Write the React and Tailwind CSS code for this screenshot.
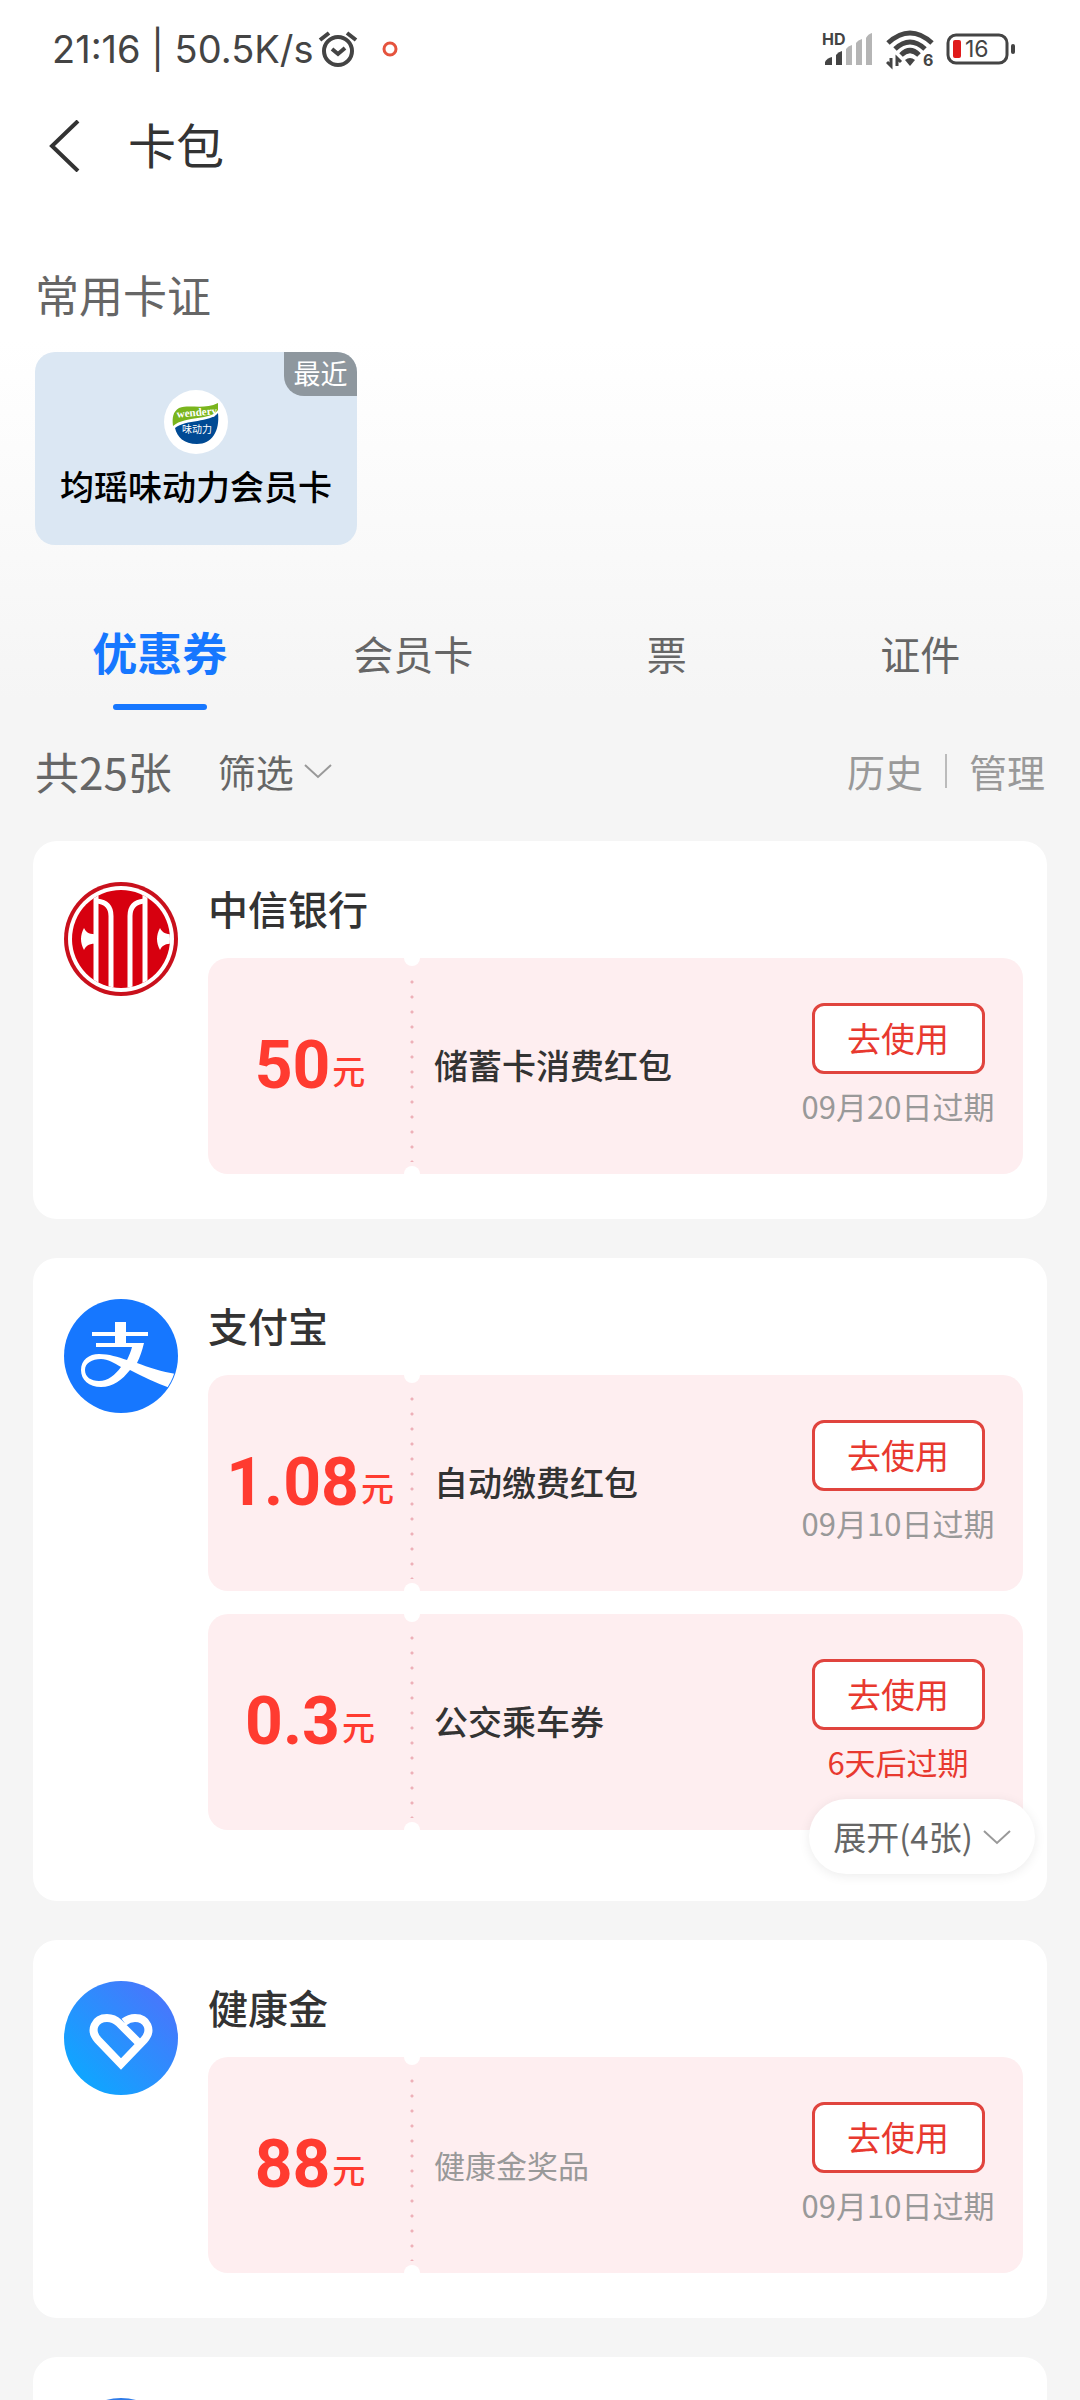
import React, { useState } from "react";

const tabs = ["优惠券", "会员卡", "票", "证件"];

const shops = [
    {
        name: "中信银行",
        logo: CiticLogo,
        coupons: [{ amount: "50", title: "储蓄卡消费红包", expire: "09月20日过期" }],
    },
    {
        name: "支付宝",
        logo: AlipayLogo,
        more: 4,
        coupons: [
            { amount: "1.08", title: "自动缴费红包", expire: "09月10日过期" },
            { amount: "0.3", title: "公交乘车券", expire: "6天后过期", urgent: true },
        ],
    },
    {
        name: "健康金",
        logo: HealthLogo,
        coupons: [{ amount: "88", title: "健康金奖品", expire: "09月10日过期", light: true }],
    },
    { name: "", logo: BlueLogo, coupons: [] },
];

function CiticLogo() {
    return (
        <svg viewBox="0 0 114 114" className="size-[114px] shrink-0" aria-hidden="true">
            <defs>
                <clipPath id="citicInner">
                    <circle cx="57" cy="57" r="49" />
                </clipPath>
            </defs>
            <circle cx="57" cy="57" r="57" fill="#c9101c" />
            <circle cx="57" cy="57" r="53" fill="#fff" />
            <g clipPath="url(#citicInner)">
                <rect width="114" height="114" fill="#d7000f" />
                <path d="M32 0V114M81 0V114" stroke="#fff" strokeWidth="5" fill="none" />
                <path d="M33 19C42 20 47 25 47 34V114M80 19C71 20 66 25 66 34V114" stroke="#fff" strokeWidth="5" fill="none" />
                <path d="M34 52C25 53 22 50 20 46C16 53 16 61 20 68C22 64 25 61 34 62Z" fill="#fff" />
                <path d="M110 52C101 53 98 50 96 46C92 53 92 61 96 68C98 64 101 61 110 62Z" fill="#fff" />
            </g>
        </svg>
    );
}

function AlipayLogo() {
    return (
        <svg viewBox="0 0 114 114" className="size-[114px] shrink-0" aria-hidden="true">
            <defs>
                <clipPath id="alipayRound">
                    <circle cx="57" cy="57" r="56" />
                </clipPath>
            </defs>
            <circle cx="57" cy="57" r="57" fill="#1677ff" />
            <g clipPath="url(#alipayRound)" fill="#fff">
                <path d="M51 23H62V33H84V37H62V44H80C78 52 76 58 73 64C84 68 98 73 112 75L106 89C92 84 78 77 66 71C58 81 49 88 37 88C25 88 17 81 17 71C17 61 25 55 35 55C45 55 54 58 63 61C65 57 67 52 68 48H32V44H51V37H28V33H51ZM37 60C28 60 21 64 21 71C21 78 27 82 35 82C44 82 51 76 57 68C50 64 44 60 37 60Z" fillRule="evenodd" />
            </g>
        </svg>
    );
}

function HealthLogo() {
    return (
        <svg viewBox="0 0 114 114" className="size-[114px] shrink-0" aria-hidden="true">
            <defs>
                <linearGradient id="healthBg" x1="0.15" y1="0.85" x2="0.85" y2="0.15">
                    <stop offset="0" stopColor="#10a5ff" />
                    <stop offset="1" stopColor="#4678fc" />
                </linearGradient>
            </defs>
            <circle cx="57" cy="57" r="57" fill="url(#healthBg)" />
            <path d="M76 63L55 42C51 38 48 37 43 37C31 37 25 49 34 59L57 83L80 59C89 49 83 37 71 37C67 37 64 38 60 41" stroke="#fff" strokeWidth="8" fill="none" />
        </svg>
    );
}

function BlueLogo() {
    return <div className="size-[114px] shrink-0 rounded-full bg-[#2f7be8]" />;
}

function WenderyLogo() {
    return (
        <svg viewBox="0 0 64 64" className="size-16" aria-hidden="true">
            <circle cx="32" cy="32" r="32" fill="#fff" />
            <path d="M9 36C8 27 9 22 15 18C25 14 40 20 54 13V20C47 31 22 25 9 36Z" fill="#7ab51d" />
            <path d="M11 38C22 29 46 33 54 23C56 41 48 54 33 54C20 54 13 47 11 38Z" fill="#004a94" />
            <text x="33" y="26" fontSize="11" fontWeight="700" textAnchor="middle" fill="#fff" fontFamily="Liberation Serif, serif" transform="rotate(-5 32 24)">wendery</text>
            <text x="33" y="43" fontSize="10" textAnchor="middle" fill="#fff">味动力</text>
        </svg>
    );
}

function Chevron() {
    return (
        <svg viewBox="0 0 28 16" className="h-4 w-7" fill="none" stroke="#999" strokeWidth="2" aria-hidden="true">
            <path d="M1 2L14 14L27 2" />
        </svg>
    );
}

function StatusBar() {
    return (
        <div className="flex h-[98px] items-center justify-between pl-[52px] pr-[64px] text-[#444]">
            <div className="flex items-center">
                <span className="font-['Inter',sans-serif] text-[38px]">21:16 | 50.5K/s</span>
                <svg viewBox="0 0 40 38" className="ml-1 h-[38px] w-10" fill="none" stroke="#444" strokeWidth="4" aria-hidden="true">
                    <circle cx="20" cy="21" r="14" />
                    <path d="M14 19L20 24L27 18M2 10L11 3M38 10L29 3" />
                </svg>
                <svg viewBox="0 0 16 16" className="ml-6 size-4" aria-hidden="true">
                    <circle cx="8" cy="8" r="6" fill="none" stroke="#e5533d" strokeWidth="3" />
                </svg>
            </div>
            <div className="flex items-center gap-3">
                <svg viewBox="0 0 52 42" className="h-[42px] w-[52px]" aria-hidden="true">
                    <text x="0" y="17" fontSize="16" fontWeight="700" fill="#444" fontFamily="Inter, sans-serif">HD</text>
                    <path d="M3 37V34Q5 30 10 29V37Z" fill="#444" />
                    <path d="M14 37V27Q16 24 20 23V37Z" fill="#444" />
                    <path d="M24 37V21Q26 18 30 17V37ZM34 37V15Q36 12 40 11V37ZM44 37V10Q46 6 50 5V37Z" fill="#b5b5b5" />
                </svg>
                <svg viewBox="0 0 48 44" className="h-11 w-12" aria-hidden="true">
                    <path d="M2 16Q24 -4 46 16M9 22Q24 8 39 22M15 28Q24 19 33 28" fill="none" stroke="#444" strokeWidth="5" />
                    <path d="M19 33Q24 29 29 33L24 39Z" fill="#444" />
                    <path d="M5 31V39L1 35M11 39V31L15 35" fill="none" stroke="#444" strokeWidth="3" />
                    <text x="37" y="39" fontSize="16" fontWeight="700" fill="#444" fontFamily="Inter, sans-serif">6</text>
                </svg>
                <svg viewBox="0 0 70 32" className="h-8 w-[70px]" aria-hidden="true">
                    <rect x="2" y="2" width="59" height="28" rx="8" fill="none" stroke="#444" strokeWidth="3" />
                    <rect x="7" y="7" width="8" height="18" rx="2" fill="#e01b1b" />
                    <rect x="65" y="11" width="4" height="10" rx="2" fill="#444" />
                    <text x="19" y="24" fontSize="23" fill="#444" fontFamily="Inter, sans-serif">16</text>
                </svg>
            </div>
        </div>
    );
}

function Coupon({ coupon }) {
    return (
        <li className="relative flex h-[216px] items-center overflow-hidden rounded-[20px] bg-[#feeef0]">
            <div className="flex w-[204px] items-end justify-center gap-0.5 text-[#ff3b30]">
                <span className="font-['Roboto',sans-serif] text-[66px] font-bold leading-none">{coupon.amount}</span>
                <span className="pb-3 text-[33px] font-medium leading-none">元</span>
            </div>
            {/* dotted tear line with the two notches */}
            <div className="absolute bottom-3 left-[202px] top-[22px] w-1 bg-[radial-gradient(circle_at_2px_2px,#eeb0b8_1px,transparent_2px)] bg-[length:4px_15px]" />
            <div className="absolute -top-2 left-[196px] size-4 rounded-full bg-white" />
            <div className="absolute -bottom-2 left-[196px] size-4 rounded-full bg-white" />
            {coupon.light ? (
                <h3 className="flex-1 pl-[22px] text-[31px] text-[#999]">{coupon.title}</h3>
            ) : (
                <h3 className="flex-1 pb-1 pl-[22px] text-[34px] font-medium text-[#333]">{coupon.title}</h3>
            )}
            <div className="flex w-[250px] flex-col items-center gap-2.5 pb-0.5">
                <button type="button" className="h-[71px] w-[173px] rounded-xl border-3 border-[#e0443e] bg-white text-[34px] leading-none text-[#e8392f]">
                    去使用
                </button>
                {coupon.urgent ? (
                    <span className="text-[31px] leading-[44px] text-[#e8392f]">{coupon.expire}</span>
                ) : (
                    <span className="text-[31px] leading-[44px] text-[#999]">{coupon.expire}</span>
                )}
            </div>
        </li>
    );
}

function ShopCard({ shop }) {
    const Logo = shop.logo;
    return (
        <section className="relative flex gap-[30px] rounded-3xl bg-white pb-[45px] pl-[31px] pr-6 pt-[41px]">
            <Logo />
            <div className="flex-1">
                <h2 className="h-[76px] text-[40px] font-medium leading-[52px] text-[#333]">{shop.name}</h2>
                <ul className="flex flex-col gap-[23px]">
                    {shop.coupons.map((coupon) => (
                        <Coupon key={coupon.title} coupon={coupon} />
                    ))}
                </ul>
                {shop.more ? <div className="h-[26px]" /> : null}
            </div>
            {shop.more ? (
                <button
                    type="button"
                    className="absolute bottom-[27px] right-3 flex h-[75px] w-[226px] items-center justify-center gap-2.5 rounded-full bg-white text-[33px] text-[#666] shadow-[0_2px_12px_rgba(0,0,0,0.08)]"
                >
                    展开({shop.more}张)
                    <Chevron />
                </button>
            ) : null}
        </section>
    );
}

export default function App() {
    const [active, setActive] = useState("优惠券");

    return (
        <div className="h-screen overflow-hidden bg-[#f5f5f5] bg-[linear-gradient(#fff_340px,#f5f5f5_700px)] font-['Noto_Sans_CJK_SC',sans-serif]">
            <StatusBar />

            <header className="flex h-24 items-center gap-12 pl-12">
                <button type="button" aria-label="返回">
                    <svg viewBox="0 0 32 52" className="h-[52px] w-8" fill="none" stroke="#333" strokeWidth="4" aria-hidden="true">
                        <path d="M30 1L4 26L30 51" />
                    </svg>
                </button>
                <h1 className="pb-1.5 text-[48px] leading-none text-[#333]">卡包</h1>
            </header>

            {/* recent card */}
            <section className="px-[35px] pt-[68px]">
                <h2 className="text-[44px] leading-[64px] text-[#666]">常用卡证</h2>
                <a
                    href="#card"
                    className="relative mt-[26px] flex h-[193px] w-[322px] flex-col items-center overflow-hidden rounded-[20px] bg-[#dbe7f3] pt-[38px]"
                >
                    <WenderyLogo />
                    <span className="mt-2 text-[34px] font-medium leading-[48px] text-black">均瑶味动力会员卡</span>
                    <span className="absolute right-0 top-0 flex h-11 w-[73px] items-center justify-center rounded-bl-[20px] bg-[#8e979e] pb-0.5 text-[27px] text-white">
                        最近
                    </span>
                </a>
            </section>

            <nav className="mt-[60px] grid grid-cols-4 px-[33px]">
                {tabs.map((tab) =>
                    tab === active ? (
                        <button key={tab} type="button" className="flex h-[105px] flex-col items-center justify-between text-[45px] font-bold leading-[94px] text-[#1677ff]">
                            {tab}
                            <span className="h-1.5 w-[94px] shrink-0 rounded-full bg-[#1677ff]" />
                        </button>
                    ) : (
                        <button key={tab} type="button" onClick={() => setActive(tab)} className="h-[105px] pb-2 text-[40px] leading-[97px] text-[#666]">
                            {tab}
                        </button>
                    )
                )}
            </nav>

            <div className="flex h-[131px] items-center px-[35px] pb-2.5 text-[38px] text-[#666]">
                <span className="text-[44px]">共25张</span>
                <button type="button" className="ml-[46px] flex items-center gap-2.5">
                    筛选
                    <Chevron />
                </button>
                <div className="ml-auto flex items-center gap-[22px] text-[#999]">
                    <a href="#history">历史</a>
                    <span className="h-[34px] w-0.5 bg-[#bbb]" />
                    <a href="#manage">管理</a>
                </div>
            </div>

            <main className="flex flex-col gap-[39px] px-[33px]">
                {shops.map((shop) => (
                    <ShopCard key={shop.name} shop={shop} />
                ))}
            </main>
        </div>
    );
}
